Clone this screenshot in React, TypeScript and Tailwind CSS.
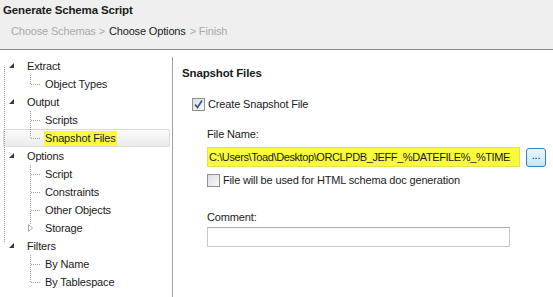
import React from "react";

type Row = {
  label: string;
  level: 0 | 1;
  expanded?: boolean;
  collapsed?: boolean;
  rootLine?: "full" | "bottom" | "top" | "none";
  childLine?: "mid" | "last";
  selected?: boolean;
};

const rows: Row[] = [
  { label: "Extract", level: 0, expanded: true, rootLine: "bottom" },
  { label: "Object Types", level: 1, rootLine: "full", childLine: "last" },
  { label: "Output", level: 0, expanded: true, rootLine: "full" },
  { label: "Scripts", level: 1, rootLine: "full", childLine: "mid" },
  { label: "Snapshot Files", level: 1, rootLine: "full", childLine: "last", selected: true },
  { label: "Options", level: 0, expanded: true, rootLine: "full" },
  { label: "Script", level: 1, rootLine: "full", childLine: "mid" },
  { label: "Constraints", level: 1, rootLine: "full", childLine: "mid" },
  { label: "Other Objects", level: 1, rootLine: "full", childLine: "mid" },
  { label: "Storage", level: 1, rootLine: "full", collapsed: true },
  { label: "Filters", level: 0, expanded: true, rootLine: "top" },
  { label: "By Name", level: 1, rootLine: "none", childLine: "mid" },
  { label: "By Tablespace", level: 1, rootLine: "none", childLine: "last" },
];

function Gutter({ row }: { row: Row }) {
  const dot = { stroke: "#a0a0a0", strokeWidth: 1, strokeDasharray: "1 1" };
  const w = row.level === 0 ? 27 : 45;
  return (
    <svg width={w} height={18} className="shrink-0">
      {row.rootLine === "full" && <line x1={4.5} y1={0} x2={4.5} y2={18} {...dot} />}
      {row.rootLine === "bottom" && <line x1={4.5} y1={10} x2={4.5} y2={18} {...dot} />}
      {row.rootLine === "top" && <line x1={4.5} y1={0} x2={4.5} y2={6} {...dot} />}
      {row.expanded && <polygon points="14,6 14,11 9,11" fill="#3a3a3a" />}
      {row.childLine && (
        <>
          <line x1={30.5} y1={0} x2={30.5} y2={row.childLine === "last" ? 9 : 18} {...dot} />
          <line x1={31} y1={9.5} x2={41} y2={9.5} {...dot} />
        </>
      )}
      {row.collapsed && (
        <>
          <line x1={30.5} y1={0} x2={30.5} y2={5} {...dot} />
          <polygon points="28.5,5.5 32.5,9 28.5,12.5" fill="none" stroke="#a8a8a8" />
        </>
      )}
    </svg>
  );
}

function Checkbox({ checked }: { checked?: boolean }) {
  return (
    <div className="w-[13px] h-[13px] border border-[#8e8f8f] bg-gradient-to-br from-[#dcdcdc] to-[#fbfbfb] flex items-center justify-center shrink-0">
      {checked && (
        <svg width="11" height="11" viewBox="0 0 11 11">
          <path d="M2 5.5 L4.5 8.5 L9 1.5" fill="none" stroke="#3d5a98" strokeWidth="1.8" />
        </svg>
      )}
    </div>
  );
}

export default function App() {
  return (
    <div
      className="w-[553px] h-[297px] flex flex-col bg-white text-[11px] tracking-[-0.15px] text-[#1b1b1b] overflow-hidden"
      style={{ fontFamily: '"Liberation Sans", Arial, sans-serif' }}
    >
      <div className="h-[50px] shrink-0 bg-[#efefef] border-b border-[#8a8a8a] pl-[3px] pt-[2px]">
        <div className="font-bold text-[11.5px] leading-[16px]">Generate Schema Script</div>
        <div className="flex gap-[4px] ml-[8px] mt-[5px] leading-[16px]">
          <span className="text-[#a9a9a9]">Choose Schemas &gt;</span>
          <span>Choose Options</span>
          <span className="text-[#a9a9a9]">&gt; Finish</span>
        </div>
      </div>

      <div className="flex flex-1 min-h-0">
        <div className="w-[173px] shrink-0 pt-[7px]">
          <div className="h-full border-r border-[#a0a0a0]">
            {rows.map((r) => (
              <div key={r.label} className="h-[18px] flex items-center relative">
                {r.selected && (
                  <div className="absolute left-[3px] right-[2px] top-0 bottom-0 rounded-[2px] border border-[#dadada] bg-gradient-to-b from-[#fafafa] to-[#ececec]" />
                )}
                <div className="relative flex items-center">
                  <Gutter row={r} />
                  <span
                    className={
                      r.selected
                        ? "bg-[#fafa3c] leading-[15px] px-[1px] -ml-[1px]"
                        : "leading-[15px]"
                    }
                  >
                    {r.label}
                  </span>
                </div>
              </div>
            ))}
          </div>
        </div>

        <div className="flex-1 pl-[9px] pt-[15px]">
          <div className="font-bold text-[11.5px] leading-[16px]">Snapshot Files</div>

          <div className="flex items-center gap-[3px] ml-[10px] mt-[15px] h-[16px]">
            <Checkbox checked />
            <span>Create Snapshot File</span>
          </div>

          <div className="ml-[25px]">
            <div className="mt-[14px] leading-[16px]">File Name:</div>
            <div className="flex items-center gap-[6px] mt-[5px]">
              <div className="w-[313px] h-[20px] shrink-0 border border-[#e2e24a] bg-[#fafa3c] pl-[1px] flex items-center whitespace-nowrap overflow-hidden tracking-[-0.4px]">
                C:\Users\Toad\Desktop\ORCLPDB_JEFF_%DATEFILE%_%TIME
              </div>
              <div className="w-[20px] h-[19px] shrink-0 rounded-[3px] border border-[#3c7fb1] bg-gradient-to-b from-[#eaf6fd] to-[#bee6fd] flex items-center justify-center text-[11px] leading-none pb-[3px]">
                ...
              </div>
            </div>

            <div className="flex items-center gap-[3px] mt-[5px] h-[16px]">
              <Checkbox />
              <span>File will be used for HTML schema doc generation</span>
            </div>

            <div className="mt-[21px] leading-[16px]">Comment:</div>
            <div className="w-[303px] h-[20px] mt-[2px] border border-[#c9c9c9] border-t-[#ababab] bg-white" />
          </div>
        </div>
      </div>
    </div>
  );
}
